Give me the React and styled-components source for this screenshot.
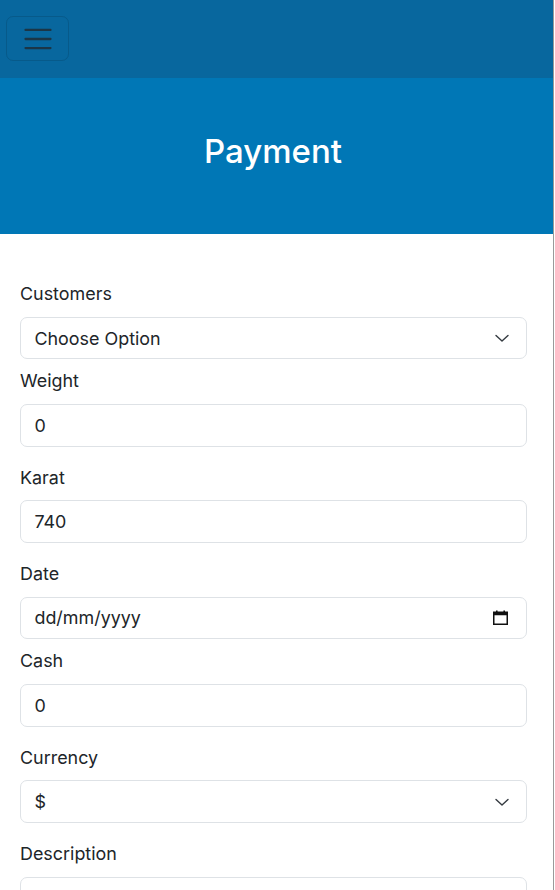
import React from 'react';
import styled, { createGlobalStyle } from 'styled-components';

/************************************* jsx *************************************/

const Chevron = () => (
	<svg width="16" height="10" viewBox="0 0 16 10" fill="none">
		<path d="M2 2.5 8 8l6-5.5" stroke="#343a40" strokeWidth="1.4" strokeLinecap="round" strokeLinejoin="round" />
	</svg>
);

const CalendarIcon = () => (
	<svg width="15" height="15" viewBox="0 0 15 15">
		<rect x="0.75" y="2.25" width="13.5" height="12" fill="none" stroke="#111" strokeWidth="1.5" />
		<rect x="0.75" y="2.25" width="13.5" height="3" fill="#111" />
		<rect x="3" y="0.5" width="1.6" height="2.5" fill="#111" />
		<rect x="10.4" y="0.5" width="1.6" height="2.5" fill="#111" />
	</svg>
);

const fields = [
	{ label: 'Customers', kind: 'select', value: 'Choose Option', tight: true },
	{ label: 'Weight', kind: 'input', value: '0' },
	{ label: 'Karat', kind: 'input', value: '740' },
	{ label: 'Date', kind: 'date', value: 'dd/mm/yyyy', tight: true },
	{ label: 'Cash', kind: 'input', value: '0' },
	{ label: 'Currency', kind: 'select', value: '$' },
	{ label: 'Description', kind: 'input', value: '' },
];

const App = () => {
	return (
		<>
			<GlobalStyle />
			<Page>
				<NavBar>
					<Toggler aria-label="menu">
						<svg width="34" height="34" viewBox="0 0 30 30">
							<path d="M4 7h22M4 15h22M4 23h22" stroke="rgba(33,37,41,0.75)" strokeWidth="2" strokeLinecap="round" />
						</svg>
					</Toggler>
				</NavBar>
				<Hero>
					<Title>Payment</Title>
				</Hero>
				<Form>
					{fields.map((f) => (
						<Group key={f.label} $tight={f.tight}>
							<Label>{f.label}</Label>
							{f.kind === 'select' && (
								<SelectWrap>
									<Select defaultValue={f.value}>
										<option>{f.value}</option>
									</Select>
									<Arrow>
										<Chevron />
									</Arrow>
								</SelectWrap>
							)}
							{f.kind === 'input' && <Input defaultValue={f.value} />}
							{f.kind === 'date' && (
								<DateBox>
									<span>{f.value}</span>
									<CalendarIcon />
								</DateBox>
							)}
						</Group>
					))}
				</Form>
			</Page>
		</>
	);
};

export default App;

/******************************** styled-components ********************************/

const GlobalStyle = createGlobalStyle`
	html, body {
		margin: 0;
		padding: 0;
		background: #ffffff;
		overflow: hidden;
	}
	body {
		font-family: Inter, "Noto Sans", "Liberation Sans", sans-serif;
		color: #212529;
	}
`;

const Page = styled.div`
	width: 553px;
	height: 890px;
	border-right: 1px solid #9a9a9a;
	background: #ffffff;
	overflow: hidden;
`;

const NavBar = styled.nav`
	height: 78px;
	background: #08679e;
	padding: 16px 6px 0;
	box-sizing: border-box;
`;

const Toggler = styled.button`
	width: 63px;
	height: 45px;
	display: flex;
	align-items: center;
	justify-content: center;
	background: transparent;
	border: 1px solid rgba(0, 0, 0, 0.12);
	border-radius: 7px;
	padding: 0;
`;

const Hero = styled.header`
	height: 156px;
	box-sizing: border-box;
	background: #0077b6;
	display: flex;
	align-items: center;
	justify-content: center;
	padding: 0 7px 8px 0;
`;

const Title = styled.h1`
	margin: 0;
	color: #ffffff;
	font-size: 33px;
	font-weight: 500;
	line-height: 1.2;
`;

const Form = styled.form`
	padding: 47px 26px 0 20px;
`;

const Group = styled.div`
	margin-bottom: ${(p) => (p.$tight ? '8.96px' : '17.92px')};
`;

const Label = styled.label`
	display: block;
	font-size: 17.92px;
	line-height: 26.88px;
	margin-bottom: 8.96px;
	color: #212529;
`;

const controlBase = `
	width: 100%;
	height: 42.56px;
	box-sizing: border-box;
	padding: 0 13.44px;
	font-family: Inter, "Noto Sans", "Liberation Sans", sans-serif;
	font-size: 17.92px;
	color: #212529;
	background: #ffffff;
	border: 1px solid #dee2e6;
	border-radius: 7px;
	outline: none;
`;

const Input = styled.input`
	${controlBase}
	display: block;
`;

const SelectWrap = styled.div`
	position: relative;
`;

const Select = styled.select`
	${controlBase}
	display: block;
	appearance: none;
	-webkit-appearance: none;
`;

const Arrow = styled.span`
	position: absolute;
	right: 17px;
	top: 50%;
	transform: translateY(-50%);
	display: flex;
	pointer-events: none;
`;

const DateBox = styled.div`
	${controlBase}
	display: flex;
	align-items: center;
	justify-content: space-between;
	padding-right: 18px;
`;
